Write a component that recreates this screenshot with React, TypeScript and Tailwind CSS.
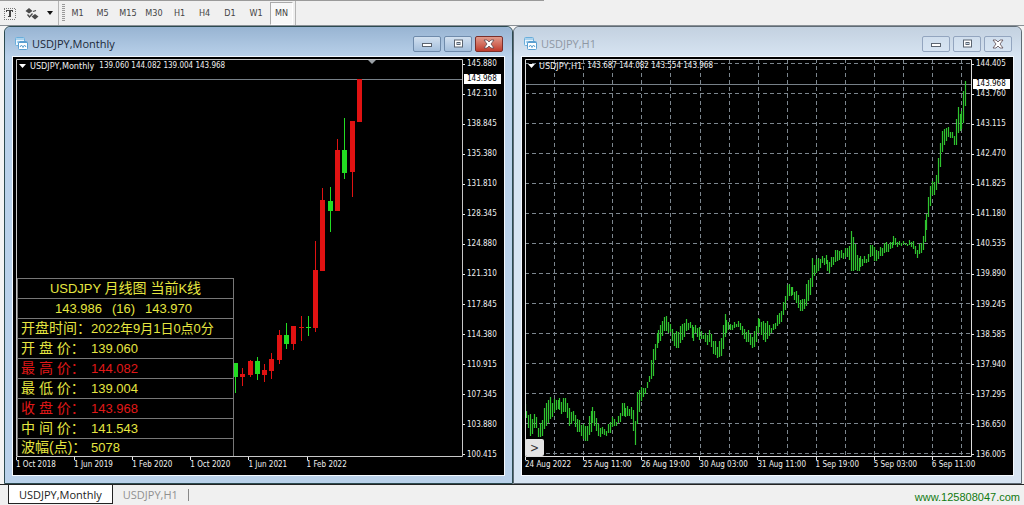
import type { ReactNode } from "react";

type Candle = { body: [number, number]; wick: [number, number]; up: boolean };

const TIMEFRAMES = [
  { label: "M1", width: "w-[25px]" },
  { label: "M5", width: "w-[25px]" },
  { label: "M15", width: "w-[26px]" },
  { label: "M30", width: "w-[26px]" },
  { label: "H1", width: "w-[25px]" },
  { label: "H4", width: "w-[25px]" },
  { label: "D1", width: "w-[26px]" },
  { label: "W1", width: "w-[26px]" },
];

const MONTHLY_PRICES = [
  "145.880", "142.310", "138.845", "135.380", "131.810", "128.345", "124.880",
  "121.310", "117.845", "114.380", "110.915", "107.345", "103.880", "100.415",
];
const MONTHLY_DATES = ["1 Oct 2018", "1 Jun 2019", "1 Feb 2020", "1 Oct 2020", "1 Jun 2021", "1 Feb 2022"];

const HOURLY_PRICES = [
  "144.405", "143.760", "143.115", "142.470", "141.825", "141.180", "140.535",
  "139.890", "139.245", "138.585", "137.940", "137.295", "136.650", "136.005",
];
const HOURLY_DATES = [
  "24 Aug 2022", "25 Aug 11:00", "26 Aug 19:00", "30 Aug 03:00",
  "31 Aug 11:00", "1 Sep 19:00", "5 Sep 03:00", "6 Sep 11:00",
];

// y positions, top to bottom
const CANDLES: Candle[] = [
  { body: [363, 377], wick: [363, 393], up: false },
  { body: [374, 377], wick: [368, 386], up: true },
  { body: [361, 375], wick: [360, 377], up: true },
  { body: [361, 374], wick: [357, 380], up: false },
  { body: [370, 375], wick: [364, 382], up: true },
  { body: [359, 371], wick: [353, 379], up: true },
  { body: [335, 360], wick: [330, 364], up: true },
  { body: [335, 344], wick: [323, 349], up: false },
  { body: [326, 344], wick: [326, 350], up: true },
  { body: [327, 328], wick: [316, 341], up: true },
  { body: [327, 328], wick: [316, 336], up: false },
  { body: [270, 328], wick: [241, 332], up: true },
  { body: [200, 271], wick: [188, 271], up: true },
  { body: [201, 211], wick: [187, 232], up: false },
  { body: [150, 211], wick: [139, 211], up: true },
  { body: [150, 173], wick: [118, 179], up: false },
  { body: [121, 172], wick: [121, 197], up: true },
  { body: [79, 122], wick: [79, 122], up: true },
];

// x, high, low
const H1_RANGE: [number, number, number][] = [
  [525, 406, 419], [527, 411, 418], [531, 415, 437], [533, 418, 433], [536, 414, 426], [539, 428, 437],
  [542, 421, 437], [545, 407, 428], [549, 396, 421], [552, 402, 417], [555, 401, 411], [558, 398, 408],
  [562, 401, 414], [567, 397, 412], [569, 408, 427], [573, 413, 421], [577, 416, 430], [581, 424, 435],
  [584, 426, 441], [587, 425, 440], [591, 410, 432], [593, 409, 424], [596, 412, 427], [599, 426, 437],
  [603, 429, 435], [607, 429, 435], [610, 422, 433], [613, 418, 427], [617, 420, 425], [620, 413, 422],
  [623, 402, 415], [627, 407, 417], [631, 408, 415], [634, 410, 432], [636, 421, 446], [638, 387, 420],
  [641, 390, 403], [644, 387, 396], [647, 384, 390], [649, 377, 382], [653, 350, 378], [655, 342, 360],
  [658, 330, 343], [662, 326, 341], [664, 314, 330], [668, 319, 332], [671, 327, 333], [673, 330, 343],
  [677, 332, 349], [680, 329, 345], [683, 322, 338], [687, 320, 330], [690, 324, 329], [693, 325, 343],
  [696, 326, 333], [700, 329, 341], [703, 333, 337], [707, 335, 345], [710, 331, 342], [713, 338, 352],
  [718, 347, 359], [722, 335, 355], [724, 312, 343], [726, 317, 333], [729, 324, 331], [734, 323, 329],
  [737, 323, 326], [742, 323, 332], [745, 331, 341], [748, 332, 343], [752, 335, 347], [754, 333, 348],
  [757, 321, 338], [760, 319, 327], [764, 322, 341], [767, 322, 341], [771, 326, 333], [775, 324, 329],
  [778, 315, 326], [782, 308, 320], [785, 296, 310], [788, 283, 297], [792, 286, 294], [795, 291, 300],
  [798, 294, 307], [802, 300, 312], [805, 298, 308], [807, 283, 307], [811, 275, 292], [812, 257, 290],
  [814, 265, 276], [818, 258, 272], [822, 257, 263], [826, 257, 265], [829, 261, 274], [833, 257, 265],
  [837, 250, 262], [840, 249, 258], [843, 253, 259], [849, 246, 256], [851, 231, 272], [853, 235, 270],
  [857, 255, 271], [860, 256, 269], [863, 258, 265], [867, 259, 263], [870, 247, 260], [872, 243, 254],
  [875, 250, 263], [879, 249, 257], [883, 247, 255], [887, 241, 251], [890, 243, 250], [895, 237, 245],
  [900, 242, 246], [905, 243, 245], [910, 241, 245], [913, 242, 249], [917, 248, 257], [919, 245, 255],
  [923, 239, 251], [925, 220, 242], [928, 208, 222], [930, 187, 213], [932, 182, 196], [934, 185, 197],
  [937, 172, 188], [939, 156, 183], [941, 138, 162], [943, 132, 150], [946, 125, 140], [949, 129, 137],
  [952, 134, 138], [955, 137, 148], [957, 102, 140], [959, 113, 127], [961, 113, 133], [963, 112, 127],
  [964, 88, 123], [966, 78, 103],
];

const INFO_ROWS = [
  { label: "开 盘 价：", value: "139.060", color: "text-[#e6e640]", height: "h-5" },
  { label: "最 高 价：", value: "144.082", color: "text-[#e01818]", height: "h-5" },
  { label: "最 低 价：", value: "139.004", color: "text-[#e6e640]", height: "h-5" },
  { label: "收 盘 价：", value: "143.968", color: "text-[#e01818]", height: "h-5" },
  { label: "中 间 价：", value: "141.543", color: "text-[#e6e640]", height: "h-5" },
  { label: "波幅(点)：", value: "5078", color: "text-[#e6e640]", height: "h-[18px]" },
];

function hourlyPath() {
  let d = "";
  let k = 0;
  for (let i = 0; i < 228; i++) {
    const x = 525 + i * 1.942;
    while (k < H1_RANGE.length - 2 && H1_RANGE[k + 1][0] < x) k++;
    const [x0, h0, l0] = H1_RANGE[k];
    const [x1, h1, l1] = H1_RANGE[k + 1];
    const t = Math.min(1, (x - x0) / (x1 - x0));
    const wobble = ((i * 7) % 5) - 2;
    const high = Math.round(h0 + (h1 - h0) * t + wobble);
    const low = Math.round(l0 + (l1 - l0) * t + wobble / 2);
    d += `M${Math.floor(x) + 0.5} ${high}V${Math.max(low, high + 2)}`;
  }
  return d;
}

export default function App() {
  return (
    <main className="flex min-h-screen flex-col bg-[#f0f0f0] font-['DejaVu_Sans_Condensed','DejaVu_Sans',sans-serif]">
      <Toolbar />
      <div className="grid flex-1 grid-cols-2 bg-[#f4f4f4] pr-0.5 pl-1">
        <ChartWindow title="USDJPY,Monthly" active>
          <Chart
            symbol="USDJPY,Monthly"
            quote="139.060 144.082 139.004 143.968"
            prices={MONTHLY_PRICES}
            dates={MONTHLY_DATES}
            tag="top-[15px]"
            plot={<MonthlyPlot />}
          >
            <InfoPanel />
          </Chart>
        </ChartWindow>
        <ChartWindow title="USDJPY,H1">
          <Chart
            symbol="USDJPY,H1"
            quote="143.687 144.082 143.554 143.968"
            prices={HOURLY_PRICES}
            dates={HOURLY_DATES}
            tag="top-5"
            plot={<HourlyPlot />}
          >
            <button aria-label="Scroll" className="absolute bottom-px left-0 h-[17px] w-[19px] rounded-xs bg-[#e4e4e4] text-xs leading-4 text-[#333]">
              &gt;
            </button>
          </Chart>
        </ChartWindow>
      </div>
      <TabBar />
    </main>
  );
}

function Toolbar() {
  return (
    <header className="flex h-[26px] items-stretch border-b border-[#8a9096] bg-[#f0f0f0] text-[9px] text-[#444]">
      <div className="flex w-[544px] items-stretch border-t border-[#9a9a9a]">
        <button aria-label="Text label" className="flex w-[18px] items-center justify-center">
          <svg width="13" height="13" viewBox="0 0 13 13" fill="none" shapeRendering="crispEdges">
            <rect x="1" y="1" width="11" height="11" stroke="#777" strokeDasharray="1 1" />
            <path d="M3 3.5h7M3.5 3v2M9.5 3v2M5 9.5h3" stroke="#444" />
            <path d="M6.500 3v7" stroke="#444" strokeWidth="2" />
          </svg>
        </button>
        <button aria-label="Arrows" className="flex w-[39px] items-center justify-end gap-2 pr-1">
          <svg width="14" height="13" viewBox="0 0 14 13" fill="none">
            <path d="M0.500 4 4 1l3.500 3L4 6.500zM6.500 9.500 10 7l3.500 2.500-3.500 3z" fill="#4a4a4a" />
            <path d="m2.500 7.500 2 2.500 3-3.500M8 4.500l3-1" stroke="#4a4a4a" strokeWidth="1.300" />
          </svg>
          <svg width="6" height="4" viewBox="0 0 6 4"><path d="M0 0h6L3 4z" fill="#111" /></svg>
        </button>
        <div className="ml-px w-px bg-[#b4b4b4]" />
        <svg className="ml-[3px] self-center" width="3" height="18" viewBox="0 0 3 18" shapeRendering="crispEdges">
          <path d="M1.500 0v18" stroke="#999" strokeWidth="3" strokeDasharray="1 1" />
        </svg>
        {TIMEFRAMES.map(({ label, width }) => (
          <button key={label} className={`${width} pt-0.5`}>{label}</button>
        ))}
        <button aria-pressed="true" className="ml-px mt-px w-[23px] border border-[#aaa] border-r-white border-b-white bg-[#f8f8f8]">
          MN
        </button>
        <div className="ml-0.5 w-px bg-[#b4b4b4]" />
      </div>
    </header>
  );
}

function ChartWindow({ title, active = false, children }: { title: string, active?: boolean, children: ReactNode }) {
  const frame = active ? "bg-[#b9d1ea] border-[#2c4a50]" : "bg-[#d7e4f2] border-[#5f6b75]";
  const bar = active ? "from-[#98b4d2] to-[#b9d1ea]" : "from-[#c3d1e0] to-[#d7e4f2]";
  const button = active ? "border-[#6f8bab] from-[#d3e1f0] to-[#a4bfdc]" : "border-[#93a5bf] from-[#d0deed] to-[#d7e4f2]";
  const close = active ? "border-[#7a2f2a] from-[#e09a8c] to-[#c0392b]" : button;

  return (
    <section className={`flex min-w-0 flex-col rounded-t-md border ${frame}`}>
      <div className={`flex h-[30px] items-center rounded-t-md bg-linear-to-b pr-0.5 pb-px pl-2.5 pt-1 ${bar}`}>
        <ChartIcon />
        <h2 className={`ml-1 flex-1 font-['Open_Sans','Noto_Sans',sans-serif] text-[11px] leading-4 ${active ? "text-[#1b2838]" : "text-[#8e98a4]"}`}>
          {title}
        </h2>
        <div className="flex gap-[3px] pr-[7px]">
          <button aria-label="Minimize" className={`flex h-4 w-7 items-center justify-center rounded-xs border bg-linear-to-b ${button}`}>
            <svg width="12" height="10" viewBox="0 0 12 10"><rect x="1.500" y="4.500" width="9" height="3" fill="#fff" stroke="#5b6470" /></svg>
          </button>
          <button aria-label="Maximize" className={`flex h-4 w-7 items-center justify-center rounded-xs border bg-linear-to-b ${button}`}>
            <svg width="11" height="9" viewBox="0 0 11 9">
              <rect x="1.500" y="1" width="8" height="7" fill="#fff" stroke="#5b6470" />
              <rect x="4" y="3.500" width="3" height="2" fill="#bcd" stroke="#5b6470" />
            </svg>
          </button>
          <button aria-label="Close" className={`flex h-4 w-7 items-center justify-center rounded-xs border bg-linear-to-b ${close}`}>
            <svg width="12" height="10" viewBox="0 0 12 10">
              <path d="M1 1h3l2 2 2-2h3L8 5l3 4H8L6 7 4 9H1l3-4z" fill="#fff" stroke="#5b4a50" strokeWidth="0.800" />
            </svg>
          </button>
        </div>
      </div>
      <div className="mx-2 mb-2 flex flex-1 shadow-[0_0_0_1px_#f4f9ff]">{children}</div>
    </section>
  );
}

function ChartIcon() {
  return (
    <svg width="13" height="13" viewBox="0 0 13 13" fill="none">
      <rect x="0.500" y="0.500" width="9" height="8" rx="1" fill="#eaf6ff" stroke="#6aaedb" />
      <path d="M1 2h8M3 4v2" stroke="#6aaedb" />
      <rect x="3.500" y="4.500" width="9" height="8" rx="1" fill="#fff" stroke="#5b9fd0" />
      <path d="M4 5.500h8" stroke="#5b9fd0" />
      <path d="m5 10 1.500-2L8 10.500 9.500 8l1.500 2" stroke="#5b9fd0" />
    </svg>
  );
}

type ChartProps = {
  symbol: string, quote: string, prices: string[], dates: string[], tag: string, plot: ReactNode, children: ReactNode
};
function Chart({ symbol, quote, prices, dates, tag, plot, children }: ChartProps) {
  return (
    <div className="flex min-w-0 flex-1 bg-black pt-0.5 pl-[3px] text-[8px] leading-[10px] text-[#f0f0f0]">
      <div className="flex min-w-0 flex-1 flex-col">
        <div className="relative min-h-[398px] flex-1">
          {plot}
          <p className="absolute top-0.5 left-[3px] flex items-center gap-1 whitespace-nowrap">
            <svg width="7" height="4" viewBox="0 0 7 4"><path d="M0 0h7L3.500 4z" fill="#fff" /></svg>
            <span className="text-[9px]">{symbol}</span>
            <span className="pl-px">{quote}</span>
          </p>
          {children}
        </div>
        <ol className="flex h-[18px]">
          {dates.map((date) => (
            <li key={date} className="w-[13%] shrink-0 whitespace-nowrap">
              <div className="h-[3px] w-px bg-[#e8e8e8]" />
              {date}
            </li>
          ))}
        </ol>
      </div>
      <div className="relative w-[41px] pb-[15px]">
        <ol className="flex h-full flex-col justify-between">
          {prices.map((price) => (
            <li key={price} className="flex items-center gap-0.5">
              <span className="h-px w-0.5 bg-[#e8e8e8]" />
              {price}
            </li>
          ))}
        </ol>
        <p className={`absolute left-px w-[37px] bg-white pl-[3px] text-black ${tag}`}>143.968</p>
      </div>
    </div>
  );
}

function MonthlyPlot() {
  return (
    <svg className="absolute inset-0 h-full w-full" viewBox="16 59 447 398" preserveAspectRatio="none" fill="none">
      <path d="M16 79.500h447" stroke="#778088" />
      {CANDLES.map(({ body, wick, up }, i) => {
        const x = Math.round(233 + i * 7.290);
        const color = up ? "#e01212" : "#22dd22";
        return (
          <g key={i}>
            <path d={`M${x + 2.5} ${wick[0]}V${wick[1]}`} stroke={color} />
            <rect x={x} y={body[0]} width="5" height={body[1] - body[0]} fill={color} />
          </g>
        );
      })}
      <path d="M367 59h10l-5 5z" fill="#9aa0a6" />
      <path d="M16.500 59.500h446v397h-446z" stroke="#c8c8c8" />
    </svg>
  );
}

function HourlyPlot() {
  const rows = Array.from({ length: 14 }, (_, i) => Math.round(63 + i * 30) + 0.5);
  const columns = Array.from({ length: 15 }, (_, i) => Math.round(554 + i * 29.1) + 0.5);
  return (
    <svg className="absolute inset-0 h-full w-full" viewBox="525 59 447 398" preserveAspectRatio="none" fill="none">
      <g stroke="#7c868e" strokeDasharray="4 3">
        {rows.map((y) => <path key={y} d={`M525 ${y}h447`} />)}
        {columns.map((x) => <path key={x} d={`M${x} 59v398`} />)}
      </g>
      <path d="M525 84.500h447" stroke="#778088" />
      <path d={hourlyPath()} stroke="#2fc42f" strokeWidth="1.200" />
      <path d="M525.500 59.500h446v397h-446z" stroke="#dcdcdc" />
    </svg>
  );
}

function InfoPanel() {
  return (
    <table className="absolute bottom-px left-px w-[217px] border-collapse border-x border-[#777] bg-black font-['Liberation_Sans','Noto_Sans_CJK_SC',sans-serif] text-[13px] leading-[17px] text-[#e6e640]">
      <tbody>
        <tr className="h-5 border-t border-[#777]">
          <th colSpan={2} className="p-0 text-center font-normal">
            USDJPY <span className="text-sm leading-[17px]">月线图 当前</span>K<span className="text-sm leading-[17px]">线</span>
          </th>
        </tr>
        <tr className="h-5 border-t border-[#777]">
          <td colSpan={2} className="p-0">
            <div className="flex justify-center gap-2.5 pr-1"><span>143.986</span><span>(16)</span><span>143.970</span></div>
          </td>
        </tr>
        <tr className="h-5 border-t border-[#777]">
          <th className="w-[73px] p-0 pl-[3px] text-left text-sm leading-[17px] font-normal whitespace-nowrap">开盘时间：</th>
          <td className="p-0 whitespace-nowrap">2022年9月1日0点0分</td>
        </tr>
        {INFO_ROWS.map(({ label, value, color, height }) => (
          <tr key={label} className={`border-t border-[#777] ${height} ${color}`}>
            <th className="w-[73px] p-0 pl-[3px] text-left text-sm leading-[17px] font-normal whitespace-nowrap">{label}</th>
            <td className="p-0">{value}</td>
          </tr>
        ))}
      </tbody>
    </table>
  );
}

function TabBar() {
  return (
    <footer className="flex h-[21px] items-start border-t border-[#222] bg-[#f0f0f0] font-['Open_Sans','Noto_Sans',sans-serif] text-[11px] leading-4">
      <nav className="flex flex-1 items-center pl-2">
        <button className="border border-t-0 border-[#222] bg-white px-2.5 pt-0.5 leading-4 text-[#222]">USDJPY,Monthly</button>
        <button className="border-r border-[#888] px-2.5 leading-3 text-[#909090]">USDJPY,H1</button>
      </nav>
      <a href="#site" className="pt-1 pr-1 font-['Liberation_Sans',sans-serif] text-[11px] text-[#117a11]">www.125808047.com</a>
    </footer>
  );
}
